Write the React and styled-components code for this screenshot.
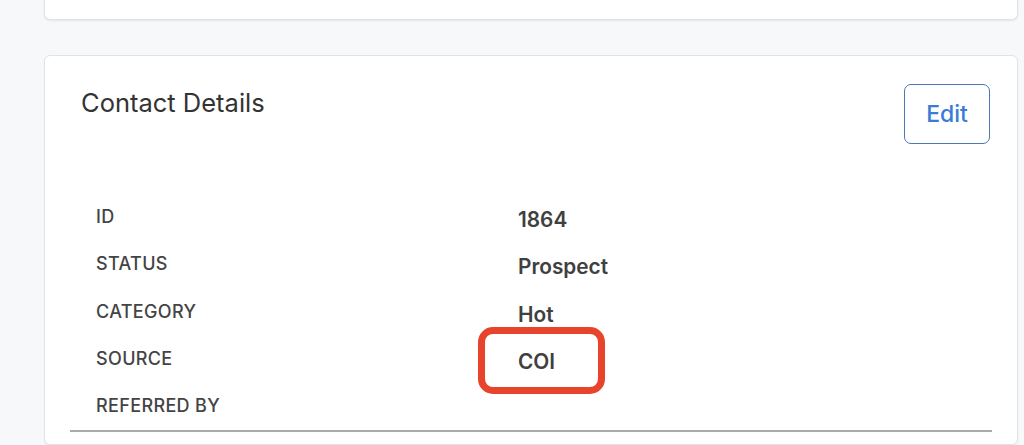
import React from "react";
import styled, { createGlobalStyle } from "styled-components";

const Global = createGlobalStyle`
  html, body { margin: 0; padding: 0; }
  body {
    background: #f7f8fa;
    font-family: Inter, "Liberation Sans", Arial, sans-serif;
    color: #333;
  }
`;

const Page = styled.div`
  display: flex;
  flex-direction: column;
  gap: 35px;
  padding: 0 6px 0 44px;
  height: 445px;
  overflow: hidden;
`;

const TopCard = styled.div`
  height: 19px;
  background: #fff;
  border: 1px solid #e1e3e6;
  border-top: none;
  border-radius: 0 0 6px 6px;
  box-shadow: 0 1px 2px rgba(0, 0, 0, 0.08);
`;

const Card = styled.section`
  background: #fff;
  border: 1px solid #e1e3e6;
  border-radius: 6px;
  box-shadow: 0 1px 2px rgba(0, 0, 0, 0.06);
  flex: 1;
`;

const Header = styled.header`
  display: flex;
  justify-content: space-between;
  align-items: flex-start;
  padding: 28px 27px 0 36px;
`;

const Title = styled.h2`
  margin: 4px 0 0;
  font-size: 25.5px;
  line-height: 30px;
  font-weight: 400;
  color: #333;
`;

const EditButton = styled.button`
  width: 86px;
  height: 60px;
  border: 1.5px solid #4a78b5;
  border-radius: 7px;
  background: #fff;
  color: #3a7bd5;
  font-family: inherit;
  font-size: 23px;
  font-weight: 500;
  cursor: pointer;
`;

const List = styled.dl`
  display: grid;
  grid-template-columns: 422px 1fr;
  grid-auto-rows: 47.4px;
  margin: 48.7px 25px 0;
  padding: 0 0 0 26px;
  border-bottom: 2px solid #aaa;
`;

const Label = styled.dt`
  display: flex;
  align-items: center;
  font-size: 18px;
  letter-spacing: 0.35px;
  font-weight: 500;
  color: #444;
`;

const Value = styled.dd`
  position: relative;
  margin: 0;
  display: flex;
  align-items: center;
  padding-top: 6px;
  font-size: 20.8px;
  font-weight: 600;
  color: #404040;
`;

const Highlight = styled.span`
  position: absolute;
  left: -40px;
  top: -8px;
  width: 127px;
  height: 67px;
  box-sizing: border-box;
  border: 7px solid #e8432b;
  border-radius: 15px;
  pointer-events: none;
`;

const rows = [
  { label: "ID", value: "1864" },
  { label: "Status", value: "Prospect" },
  { label: "Category", value: "Hot" },
  { label: "Source", value: "COI", highlight: true },
  { label: "Referred By", value: "" },
];

export default function App() {
  return (
    <>
      <Global />
      <Page>
        <TopCard />
        <Card>
          <Header>
            <Title>Contact Details</Title>
            <EditButton>Edit</EditButton>
          </Header>
          <List>
            {rows.map((r) => (
              <React.Fragment key={r.label}>
                <Label>{r.label.toUpperCase()}</Label>
                <Value>
                  {r.value}
                  {r.highlight && <Highlight />}
                </Value>
              </React.Fragment>
            ))}
          </List>
        </Card>
      </Page>
    </>
  );
}
